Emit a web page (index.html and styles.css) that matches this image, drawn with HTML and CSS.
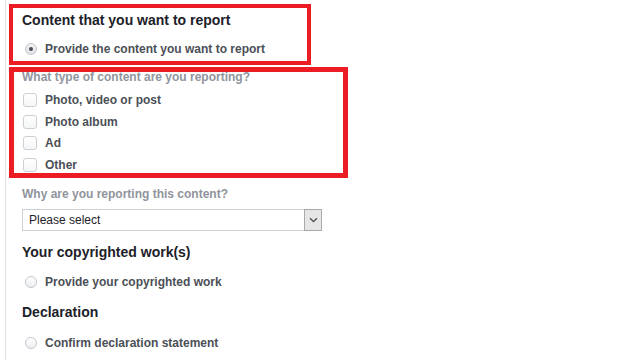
FILE: index.html
```html
<!DOCTYPE html>
<html lang="en">

<head>
    <meta charset="UTF-8">
    <meta name="viewport" content="width=device-width, initial-scale=1.0">
    <title>Report content</title>
    <link rel="stylesheet" href="styles.css">
</head>

<body>
    <div class="page">
        <div class="mark mark-first">
            <h2 class="title">Content that you want to report</h2>
            <label class="choice">
                <span class="radio checked"></span>
                <span>Provide the content you want to report</span>
            </label>
        </div>

        <div class="mark mark-second">
            <p class="question">What type of content are you reporting?</p>
            <div class="checks">
                <label class="choice check-row"><span class="checkbox"></span><span>Photo, video or post</span></label>
                <label class="choice check-row"><span class="checkbox"></span><span>Photo album</span></label>
                <label class="choice check-row"><span class="checkbox"></span><span>Ad</span></label>
                <label class="choice check-row"><span class="checkbox"></span><span>Other</span></label>
            </div>
        </div>

        <div class="rest">
            <p class="question why">Why are you reporting this content?</p>
            <div class="select">
                <span class="select-text">Please select</span>
                <span class="select-arrow">
                    <svg width="9" height="6" viewBox="0 0 9 6">
                        <path d="M1 1.2 L4.5 4.6 L8 1.2" fill="none" stroke="#555" stroke-width="1.4"/>
                    </svg>
                </span>
            </div>

            <h2 class="title section">Your copyrighted work(s)</h2>
            <label class="choice row-gap">
                <span class="radio"></span>
                <span>Provide your copyrighted work</span>
            </label>

            <h2 class="title section">Declaration</h2>
            <label class="choice row-gap last">
                <span class="radio"></span>
                <span>Confirm declaration statement</span>
            </label>
        </div>
    </div>
</body>

</html>
```

FILE: styles.css
```css
* {
    box-sizing: border-box;
}

body {
    margin: 0;
    background: #fff;
    font-family: "Liberation Sans", Arial, sans-serif;
}

.page {
    margin-left: 5px;
    border-left: 1px solid #dddfe2;
    min-height: 360px;
    padding-top: 4px;
}

.mark {
    margin-left: 3px;
    border: 4px solid #ec1c24;
}

.mark-first {
    width: 302px;
    padding: 3px 0 3px 9px;
}

.mark-second {
    width: 339px;
    margin-top: 2px;
    border-width: 5px;
    padding: 0 0 0 8px;
}

.title {
    margin: 0;
    font-size: 14px;
    line-height: 18px;
    font-weight: bold;
    color: #1d2129;
}

.choice {
    display: flex;
    align-items: center;
    gap: 8px;
    height: 18px;
    font-size: 12px;
    font-weight: bold;
    color: #4b4f56;
}

.mark-first .choice {
    margin-top: 11px;
}

.radio {
    width: 12px;
    height: 12px;
    margin-left: 3px;
    border: 1px solid #c4c7cc;
    border-radius: 50%;
    background: linear-gradient(#fff, #eceef1);
    display: flex;
    align-items: center;
    justify-content: center;
}

.radio.checked {
    background: linear-gradient(#f1f2f4, #e2e4e7);
}

.radio.checked::after {
    content: "";
    width: 4px;
    height: 4px;
    border-radius: 50%;
    background: #4b4f56;
}

.question {
    margin: -1px 0 0;
    font-size: 12px;
    line-height: 12px;
    font-weight: bold;
    color: #90949c;
}

.checks {
    margin-top: 9px;
    display: flex;
    flex-direction: column;
    gap: 5.5px;
}

.check-row {
    height: 16px;
}

.checkbox {
    width: 14px;
    height: 14px;
    margin-left: 1px;
    border: 1px solid #ccd0d5;
    border-radius: 3px;
    background: linear-gradient(#fff, #f5f6f7);
}

.rest {
    padding-left: 16px;
}

.why {
    margin: 8px 0 0;
    line-height: 16px;
}

.select {
    margin-top: 7px;
    width: 300px;
    height: 22px;
    border: 1px solid #ccd0d5;
    display: flex;
    align-items: center;
    justify-content: space-between;
    font-size: 12px;
    color: #1d2129;
}

.select-text {
    padding-left: 6px;
}

.select-arrow {
    width: 18px;
    height: 22px;
    margin: -1px -1px -1px 0;
    border: 1px solid #a9a9a9;
    background: #e6e6e6;
    display: flex;
    align-items: center;
    justify-content: center;
}

.section {
    margin-top: 12px;
}

.row-gap {
    margin-top: 12px;
}

.row-gap.last {
    margin-top: 13px;
}
```
